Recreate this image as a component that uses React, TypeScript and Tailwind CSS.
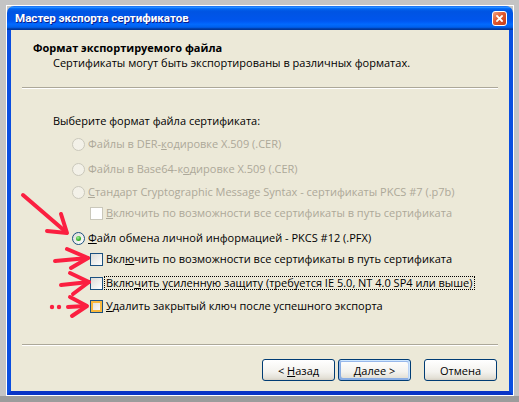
import type { ReactNode } from 'react'

function Radio({ checked = false, disabled = false }: { checked?: boolean; disabled?: boolean }) {
  if (disabled) {
    return <span className="box-border flex h-[13px] w-[13px] shrink-0 rounded-full border border-[#cac8bb] bg-[#f3f1e8]" />
  }
  return (
    <span className="box-border flex h-[13px] w-[13px] shrink-0 items-center justify-center rounded-full border border-[#1c5180] bg-[linear-gradient(135deg,#dcdcd7,#ffffff)]">
      {checked && (
        <span className="h-[5px] w-[5px] rounded-full bg-[radial-gradient(circle_at_40%_35%,#a6ee9e_0%,#34b42c_55%,#1a8a14_100%)]" />
      )}
    </span>
  )
}

function Check({ disabled = false, hover = false }: { disabled?: boolean; hover?: boolean }) {
  if (disabled) {
    return <span className="box-border h-[13px] w-[13px] shrink-0 border border-[#cac8bb] bg-white" />
  }
  if (hover) {
    return (
      <span className="box-border h-[13px] w-[13px] shrink-0 border border-[#1c5180] bg-[linear-gradient(135deg,#dcdcd7,#ffffff)] shadow-[inset_0_0_0_2px_#f8b83e]" />
    )
  }
  return <span className="box-border h-[13px] w-[13px] shrink-0 border border-[#1c5180] bg-[linear-gradient(135deg,#dcdcd7,#ffffff)]" />
}

function Row({ className, control, children, muted = false }: { className: string; control: ReactNode; children: ReactNode; muted?: boolean }) {
  return (
    <div className={`flex h-[14px] items-center ${className}`}>
      {control}
      <span className={`ml-[3px] whitespace-nowrap leading-[14px] ${muted ? 'text-[#aca899]' : 'text-black'}`}>{children}</span>
    </div>
  )
}

function XpButton({ children, isDefault = false }: { children: ReactNode; isDefault?: boolean }) {
  return (
    <button
      className={`box-border flex h-[22px] w-[73px] items-center justify-center rounded-[3px] border border-[#003c74] bg-[linear-gradient(180deg,#ffffff,#f3f2ee_60%,#e3e0d6_90%,#d6d0c5)] text-[11px] leading-none text-black ${
        isDefault
          ? 'shadow-[inset_-1px_1px_#cee7ff,inset_1px_2px_#98b8ea,inset_-2px_2px_#bcd4f6,inset_1px_-1px_#89ade4,inset_2px_-2px_#89ade4]'
          : ''
      }`}
    >
      <span className="whitespace-pre">{children}</span>
    </button>
  )
}

function Arrows() {
  const red = '#fb1f40'
  return (
    <svg className="pointer-events-none absolute left-0 top-0" width="519" height="402" viewBox="0 0 519 402">
      <g fill="none" stroke={red} strokeWidth="4" strokeLinecap="round" strokeLinejoin="round">
        {/* arrow to the PFX radio */}
        <path d="M23 195 L66 232" />
        <path d="M61 214 L67 233 L47 231" />
        {/* arrow to first checkbox */}
        <path d="M55 261 L88 258" />
        <path d="M67 249 L88 258 L71 268" />
        {/* arrow to strong protection */}
        <path d="M61 285 L89 282" />
        <path d="M70 273 L89 282 L73 294" />
        {/* dotted arrow to delete key */}
        <path d="M70 297 L87 306 L72 316" />
        <path d="M68 307 L86 306" />
      </g>
      <g fill={red}>
        <circle cx="52" cy="307" r="2.2" />
        <circle cx="59" cy="307" r="2.2" />
      </g>
    </svg>
  )
}

export default function App() {
  return (
    <div className="relative flex h-[402px] w-[519px] flex-col overflow-hidden bg-[#c4c4c4] font-['Open_Sans',sans-serif] text-[11px] text-black">
      <div className="pl-[6px] pr-[5px] pt-[5px]">
        <div className="box-border h-[391px] border border-white bg-[#c4c4c4]">
          <div className="flex h-[389px] w-[506px] flex-col overflow-hidden rounded-t-[7px]">
            {/* Title bar */}
            <div className="flex h-[24px] shrink-0 items-center justify-between bg-[linear-gradient(180deg,#0058ee_0%,#3593ff_4%,#288eff_6%,#127dff_8%,#036ffc_10%,#0262ee_14%,#0057e5_20%,#0054e3_24%,#0055eb_56%,#005bf5_66%,#026afe_76%,#0062ef_86%,#0052d6_92%,#0040ab_94%,#003092_100%)] pl-[8px] pr-[6px]">
              <span className="pt-[2px] font-['Roboto',sans-serif] text-[11.6px] font-bold leading-none text-white [text-shadow:1px_1px_0_#0a1e8c]">
                Мастер экспорта сертификатов
              </span>
              <span className="box-border flex h-[15px] w-[15px] items-center justify-center rounded-[3px] border border-white bg-[linear-gradient(135deg,#f4a585,#e2582f_45%,#c43d17)]">
                <svg width="7" height="7" viewBox="0 0 7 7">
                  <path d="M1 1 L6 6 M6 1 L1 6" stroke="white" strokeWidth="1.8" strokeLinecap="square" />
                </svg>
              </span>
            </div>

            {/* Body */}
            <div className="flex flex-1 flex-col border-x-4 border-b-4 border-x-[#0a4ee0] border-b-[#0a34c6] bg-[#ece9d8]">
              <div className="pl-[22px] pt-[11px]">
                <div className="font-bold leading-[14px]">Формат экспортируемого файла</div>
                <div className="mt-[1px] pl-[20px] leading-[14px]">Сертификаты могут быть экспортированы в различных форматах.</div>
              </div>

              <div className="mx-[11px] mt-[17px] h-[2px] border-t border-b border-t-[#aca899] border-b-white" />

              <div className="pl-[42px]">
                <div className="mt-[25px] leading-[14px]">Выберите формат файла сертификата:</div>

                <Row className="mt-[9px] pl-[19px]" control={<Radio disabled />} muted>
                  Файлы в DER-<u>к</u>одировке X.509 (.CER)
                </Row>
                <Row className="mt-[11px] pl-[19px]" control={<Radio disabled />} muted>
                  Файлы в Base64-к<u>о</u>дировке X.509 (.CER)
                </Row>
                <Row className="mt-[9px] pl-[19px]" control={<Radio disabled />} muted>
                  <u>С</u>тандарт Cryptographic Message Syntax - сертификаты PKCS #7 (.p7b)
                </Row>
                <Row className="mt-[7px] pl-[37px]" control={<Check disabled />} muted>
                  <u>В</u>ключить по возможности все сертификаты в путь сертификата
                </Row>
                <Row className="mt-[11px] pl-[19px]" control={<Radio checked />}>
                  <u>Ф</u>айл обмена личной информацией - PKCS #12 (.PFX)
                </Row>
                <Row className="mt-[7px] pl-[37px]" control={<Check />}>
                  Вкл<u>ю</u>чить по возможности все сертификаты в путь сертификата
                </Row>
                <div className="mt-[10px] flex h-[14px] items-center pl-[37px]">
                  <Check />
                  <span className="ml-[1px] whitespace-nowrap border border-dotted border-black px-[1px] leading-[12px]">
                    Вклю<u>ч</u>ить усиленную защиту (требуется IE 5.0, NT 4.0 SP4 или выше)
                  </span>
                </div>
                <Row className="mt-[9px] pl-[37px]" control={<Check hover />}>
                  <u>У</u>далить закрытый ключ после успешного экспорта
                </Row>
              </div>

              <div className="mx-[11px] mt-[31px] h-[2px] border-t border-b border-t-[#aca899] border-b-white" />

              <div className="mt-[13px] flex justify-end pr-[12px]">
                <XpButton>
                  {'< '}<u>Н</u>азад
                </XpButton>
                <div className="ml-[3px]">
                  <XpButton isDefault>
                    <u>Д</u>алее{' >'}
                  </XpButton>
                </div>
                <div className="ml-[13px]">
                  <XpButton>Отмена</XpButton>
                </div>
              </div>
            </div>
          </div>
        </div>
      </div>
      <div className="h-[6px] bg-[#9c9c9c]" />
      <Arrows />
    </div>
  )
}
